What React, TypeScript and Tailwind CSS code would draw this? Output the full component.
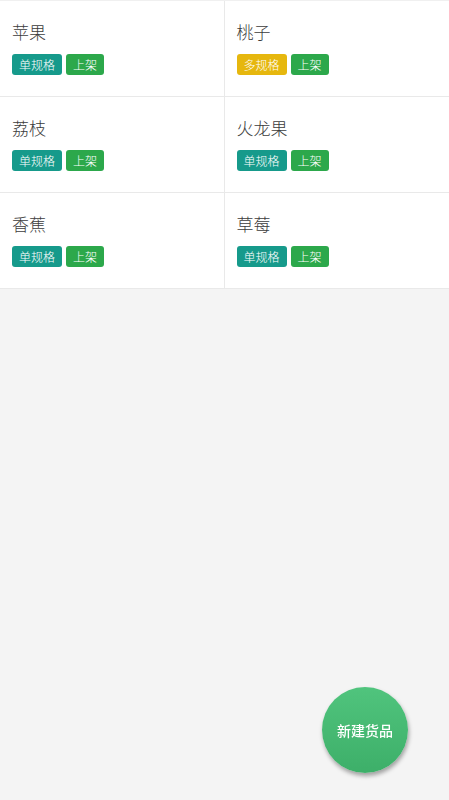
const goods = [
  { name: '苹果', spec: '单规格', multi: false },
  { name: '桃子', spec: '多规格', multi: true },
  { name: '荔枝', spec: '单规格', multi: false },
  { name: '火龙果', spec: '单规格', multi: false },
  { name: '香蕉', spec: '单规格', multi: false },
  { name: '草莓', spec: '单规格', multi: false },
]

export default function App() {
  return (
    <div
      className="min-h-screen bg-[#f4f4f4] relative"
      style={{ fontFamily: '"Noto Sans CJK SC", "Noto Sans", sans-serif' }}
    >
      <div className="grid grid-cols-2 bg-white border-t border-[#f0f0f0]">
        {goods.map((g, i) => (
          <div
            key={g.name}
            className={`h-[96px] border-b border-[#e9e9e9] px-3 pt-[19px] ${i % 2 === 0 ? 'border-r' : ''}`}
          >
            <div className="text-[17px] leading-[24px] font-light text-[#3c3c3c]">{g.name}</div>
            <div className="mt-[10px] flex gap-1">
              <span
                className={`h-[21px] px-[7px] rounded-[3px] text-[12px] leading-[21px] font-light text-white ${
                  g.multi ? 'bg-[#e6b70e]' : 'bg-[#169a8b]'
                }`}
              >
                {g.spec}
              </span>
              <span className="h-[21px] px-[7px] rounded-[3px] text-[12px] leading-[21px] font-light text-white bg-[#2ca84b]">
                上架
              </span>
            </div>
          </div>
        ))}
      </div>

      <button className="fixed right-[41px] bottom-[27px] w-[86px] h-[86px] rounded-full bg-gradient-to-b from-[#50c47d] to-[#3daf69] text-white text-[14px] font-medium shadow-[1px_3px_4px_rgba(0,0,0,0.35)]">
        新建货品
      </button>
    </div>
  )
}
